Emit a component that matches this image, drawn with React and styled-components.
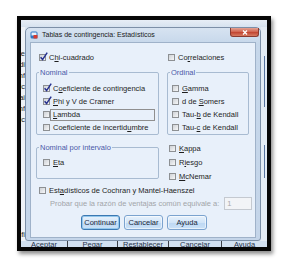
import React from "react";
import styled, { createGlobalStyle, css } from "styled-components";

//-----------Styling--------------//

const GlobalStyle = createGlobalStyle`
  html, body {
    margin: 0;
    padding: 0;
    background: #ffffff;
  }
  body {
    font-family: "Liberation Sans", Arial, sans-serif;
    width: 296px;
    height: 275px;
    overflow: hidden;
  }
`;

const Page = styled.div`
  padding: 16px 0 0 17px;
`;

const Frame = styled.div`
  width: 246px;
  height: 227px;
  border: 4px solid #060606;
  box-shadow: 2px 3px 4px rgba(0, 0, 0, 0.45);
  display: flex;
  flex-direction: column;
  overflow: hidden;
  background: #dbe6f2;
`;

const TopBand = styled.div`
  height: 7px;
  flex: none;
  background: linear-gradient(#e8eef6, #d6e2ef);
`;

const Middle = styled.div`
  display: flex;
  height: 214px;
  flex: none;
`;

const LeftStrip = styled.div`
  width: 4px;
  flex: none;
  overflow: hidden;
  direction: rtl;
  background: #eef2f7;
  padding-top: 21px;
  box-sizing: border-box;
  font-size: 7.5px;
  line-height: 11px;
  color: #252525;
`;

const StripGap = styled.div`
  height: ${(p) => p.$h}px;
`;

const RightStrip = styled.div`
  width: 6px;
  flex: none;
  background: #e4ecf5;
  padding-top: 29px;
  box-sizing: border-box;
`;

const StripLine = styled.div`
  width: 1px;
  margin: ${(p) => p.$mt}px 0 0 3px;
  height: ${(p) => p.$h}px;
  background: #57739f;
`;

const Window = styled.div`
  width: 236px;
  height: 214px;
  flex: none;
  box-sizing: border-box;
  border: 1px solid #7c8fa7;
  border-radius: 5px 5px 3px 3px;
  background: linear-gradient(#d7e3f1, #c6d7ea 16px, #c4d5e9);
  padding: 0 4px 2px 4px;
  display: flex;
  flex-direction: column;
`;

const TitleBar = styled.div`
  height: 14px;
  margin: 0 -4px;
  display: flex;
  align-items: center;
`;

const TitleIcon = styled.svg`
  width: 8px;
  height: 8px;
  margin-left: 4px;
  flex: none;
`;

const TitleText = styled.span`
  margin-left: 4px;
  font-size: 7px;
  line-height: 14px;
  color: #1a1a1a;
  white-space: nowrap;
`;

const CloseButton = styled.div`
  margin: 0 1px 0 auto;
  align-self: flex-start;
  width: 29px;
  height: 9px;
  box-sizing: border-box;
  border: 1px solid #8a3a30;
  border-top: none;
  border-radius: 0 0 3px 3px;
  background: linear-gradient(#e4a393, #d0604c 50%, #c24632 55%, #d77b63);
  display: flex;
  align-items: center;
  justify-content: center;
`;

const Panel = styled.div`
  height: 196px;
  box-sizing: border-box;
  border: 1px solid #9fb2c9;
  background: #e8f0fa;
  padding: 8px 3px 0 5px;
  display: flex;
  flex-direction: column;
`;

const Columns = styled.div`
  display: grid;
  grid-template-columns: 123px 82px;
  column-gap: 8px;
  align-items: start;
`;

const Group = styled.fieldset`
  margin: ${(p) => p.$mt || 0}px 0 0 0;
  padding: 0;
  min-width: 0;
  border: 1px solid #a8bbd1;
  border-radius: 2px;
`;

const Legend = styled.legend`
  margin-left: 2px;
  padding: 0 1px;
  font-size: 7.5px;
  line-height: 9px;
  color: #4b59a8;
`;

const GroupBody = styled.div`
  padding: ${(p) => p.$pt}px 0 ${(p) => p.$pb}px ${(p) => p.$pl}px;
`;

const Stack = styled.div`
  margin-top: ${(p) => p.$mt || 0}px;
  display: flex;
  flex-direction: column;
`;

const CheckRow = styled.div`
  display: flex;
  align-items: center;
  height: ${(p) => p.$h || 13}px;
  padding-left: ${(p) => p.$indent || 0}px;
  margin-top: ${(p) => p.$mt || 0}px;
`;

const Box = styled.span`
  position: relative;
  width: 7px;
  height: 7px;
  flex: none;
  box-sizing: border-box;
  border: 1px solid #8d9093;
  background: linear-gradient(135deg, #cfd2d6, #f6f7f8);
`;

const Tick = styled.svg`
  position: absolute;
  left: -1px;
  top: -3px;
  width: 9px;
  height: 9px;
  overflow: visible;
`;

const Label = styled.span`
  margin-left: 3px;
  font-size: 7.5px;
  line-height: 9px;
  color: #1e1e1e;
  white-space: nowrap;

  ${(p) =>
    p.$focus &&
    css`
      margin-left: 0;
      width: 105px;
      height: 12px;
      box-sizing: border-box;
      padding-left: 2px;
      border: 1px solid #8f8f8f;
      line-height: 10px;
    `}
`;

const Key = styled.span`
  text-decoration: underline;
`;

const RatioRow = styled.div`
  display: flex;
  align-items: center;
  height: 13px;
  padding-left: 14px;
`;

const Muted = styled.span`
  font-size: 7.5px;
  color: #a2a5a9;
  white-space: nowrap;
`;

const Field = styled.div`
  margin-left: 5px;
  width: 29px;
  height: 13px;
  box-sizing: border-box;
  border: 1px solid #c4c9d0;
  background: #f2f4f7;
  padding-left: 2px;
  font-size: 7.5px;
  line-height: 11px;
  color: #a8a8a8;
`;

const ButtonRow = styled.div`
  display: flex;
  justify-content: center;
  gap: 4px;
  margin-top: 5px;
`;

const Button = styled.button`
  width: ${(p) => p.$w}px;
  height: 15px;
  padding: 0;
  font-family: inherit;
  font-size: 7.5px;
  color: #1b2738;
  border: 1px solid ${(p) => (p.$primary ? "#3b78b2" : "#7ba3cf")};
  border-radius: 3px;
  background: linear-gradient(#e8f2fc, #d2e5f8 50%, #bdd8f3 52%, #cce2f7);
  box-shadow: ${(p) =>
    p.$primary ? "inset 0 0 0 1px #93c7ec" : "inset 0 0 0 1px rgba(255,255,255,0.55)"};
`;

const BottomBar = styled.div`
  height: 6px;
  flex: none;
  display: flex;
  overflow: hidden;
  background: #d2e0f0;
`;

const BarCell = styled.div`
  width: ${(p) => p.$w}px;
  flex: none;
  box-sizing: border-box;
  border-left: ${(p) => (p.$first ? "none" : "1px solid #3b3f46")};
  text-align: center;
  font-size: 7.5px;
  line-height: 8px;
  color: #27324a;
`;

//----------------component's logic------------------///

const Check = ({ checked, indent, h, mt, focus, children }) => (
  <CheckRow $indent={indent} $h={h} $mt={mt}>
    <Box>
      {checked && (
        <Tick viewBox="0 0 9 9">
          <path d="M1.6 5.2 L3.6 7.6 L8.2 0.6" fill="none" stroke="#26318f" strokeWidth="1.5" />
        </Tick>
      )}
    </Box>
    <Label $focus={focus}>{children}</Label>
  </CheckRow>
);

const App = () => {
  return (
    <Page>
      <GlobalStyle />
      <Frame>
        <TopBand />
        <Middle>
          <LeftStrip>
            <div>ne</div>
            <div>di</div>
            <div>nf</div>
            <div>ic</div>
            <div>ai</div>
            <div>nf</div>
            <div>ic</div>
            <StripGap $h={104} />
            <div>fi</div>
          </LeftStrip>
          <Window>
            <TitleBar>
              <TitleIcon viewBox="0 0 8 8">
                <rect x="0.5" y="0.5" width="7" height="7" rx="1.5" fill="#2f78c4" />
                <rect x="1.5" y="1.5" width="5" height="3" fill="#e9f2fb" />
                <rect x="3.5" y="4" width="4" height="3.5" rx="0.5" fill="#d63b2f" />
              </TitleIcon>
              <TitleText>Tablas de contingencia: Estadísticos</TitleText>
              <CloseButton>
                <svg width="6" height="5" viewBox="0 0 6 5">
                  <path d="M1 0.5 L5 4.5 M5 0.5 L1 4.5" stroke="#ffffff" strokeWidth="1.3" />
                </svg>
              </CloseButton>
            </TitleBar>
            <Panel>
              <Columns>
                <Check checked indent={3}>
                  C<Key>h</Key>i-cuadrado
                </Check>
                <Check indent={1}>
                  Co<Key>r</Key>relaciones
                </Check>

                <Group $mt={4}>
                  <Legend>Nominal</Legend>
                  <GroupBody $pt={5} $pb={0} $pl={6}>
                    <Check checked>
                      C<Key>o</Key>eficiente de contingencia
                    </Check>
                    <Check checked>
                      <Key>P</Key>hi y V de Cramer
                    </Check>
                    <Check focus>
                      <Key>L</Key>ambda
                    </Check>
                    <Check>
                      Coeficiente de incertid<Key>u</Key>mbre
                    </Check>
                  </GroupBody>
                </Group>
                <Group $mt={4}>
                  <Legend>Ordinal</Legend>
                  <GroupBody $pt={5} $pb={0} $pl={4}>
                    <Check>
                      <Key>G</Key>amma
                    </Check>
                    <Check>
                      d de <Key>S</Key>omers
                    </Check>
                    <Check>
                      Tau-<Key>b</Key> de Kendall
                    </Check>
                    <Check>
                      Tau-<Key>c</Key> de Kendall
                    </Check>
                  </GroupBody>
                </Group>

                <Group $mt={8}>
                  <Legend>Nominal por intervalo</Legend>
                  <GroupBody $pt={4} $pb={9} $pl={6}>
                    <Check>
                      <Key>E</Key>ta
                    </Check>
                  </GroupBody>
                </Group>
                <Stack $mt={6}>
                  <Check indent={2} h={14}>
                    <Key>K</Key>appa
                  </Check>
                  <Check indent={2} h={14}>
                    R<Key>i</Key>esgo
                  </Check>
                  <Check indent={2} h={14}>
                    <Key>M</Key>cNemar
                  </Check>
                </Stack>
              </Columns>

              <Check indent={3} mt={1}>
                Est<Key>a</Key>dísticos de Cochran y Mantel-Haenszel
              </Check>
              <RatioRow>
                <Muted>Probar que la razón de ventajas común equivale a:</Muted>
                <Field>1</Field>
              </RatioRow>

              <ButtonRow>
                <Button $w={39} $primary>
                  Continuar
                </Button>
                <Button $w={39}>Cancelar</Button>
                <Button $w={40}>Ayuda</Button>
              </ButtonRow>
            </Panel>
          </Window>
          <RightStrip>
            <StripLine $mt={0} $h={51} />
            <StripLine $mt={38} $h={33} />
          </RightStrip>
        </Middle>
        <BottomBar>
          <BarCell $w={46} $first>
            Aceptar
          </BarCell>
          <BarCell $w={50}>Pegar</BarCell>
          <BarCell $w={51}>Restablecer</BarCell>
          <BarCell $w={53}>Cancelar</BarCell>
          <BarCell $w={46}>Ayuda</BarCell>
        </BottomBar>
      </Frame>
    </Page>
  );
};

export default App;
